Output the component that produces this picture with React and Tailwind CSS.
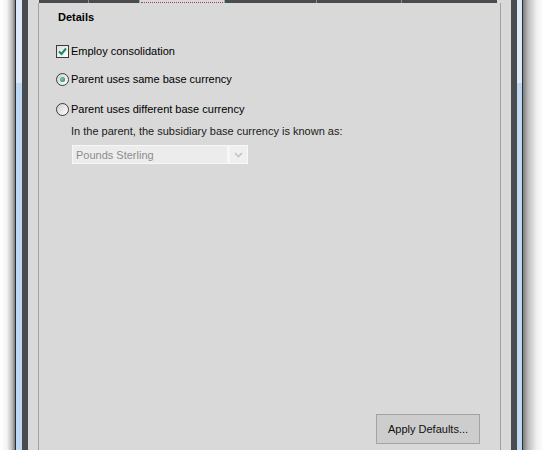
import React from 'react';

const font = { fontFamily: '"Liberation Sans", Arial, sans-serif' };

const Checkbox = ({ checked }) => (
  <span className="relative inline-block w-[13px] h-[13px] border border-[#3c3c3c] bg-[linear-gradient(135deg,#dcdcdc,#ffffff)] shrink-0">
    {checked && (
      <svg className="absolute left-[1px] top-[1px]" width="9" height="9" viewBox="0 0 9 9">
        <path d="M1 4.5 L3.5 7 L8 1.5" fill="none" stroke="#1b8a66" strokeWidth="2" />
      </svg>
    )}
  </span>
);

const Radio = ({ checked }) => (
  <span className="flex items-center justify-center w-[13px] h-[13px] rounded-full border border-[#3c3c3c] bg-[linear-gradient(135deg,#d0d0d0,#ffffff)] shrink-0">
    {checked && (
      <span className="w-[5px] h-[5px] rounded-full bg-[radial-gradient(circle_at_40%_40%,#7fd0b4,#137a58)]" />
    )}
  </span>
);

const TabStrip = () => (
  <div className="flex h-[3px]">
    <div className="w-[49px] bg-[#4a4b4f]" />
    <div className="w-px bg-[#8d8e92]" />
    <div className="w-[50px] bg-[#4a4b4f]" />
    {/* selected tab */}
    <div className="w-[86px] border-x border-[#6fbca6] bg-[#d9d9d9] flex flex-col">
      <div className="h-[2px]" />
      <div className="h-px mx-[1px] border-t border-dotted border-[#a0405a]" />
    </div>
    <div className="w-[91px] bg-[#4a4b4f]" />
    <div className="w-px bg-[#8d8e92]" />
    <div className="w-[84px] bg-[#4a4b4f]" />
    <div className="w-px bg-[#8d8e92]" />
    <div className="w-[95px] bg-[#4a4b4f]" />
    <div className="flex-1 bg-[#d9d9d9]" />
  </div>
);

export default function App() {
  return (
    <div className="w-[544px] h-[450px] overflow-hidden flex bg-[#d9d9d9] text-[11px] text-black" style={font}>
      {/* left frame */}
      <div className="w-[15px] bg-[linear-gradient(to_right,#ffffff_0%,#f4f4f4_45%,#bdbdbd_80%,#7c7c7c_100%)]" />
      <div className="w-px bg-[#2e2e30]" />
      <div className="w-[6px] flex flex-col">
        <div className="h-[83px] bg-[#dce9f8]" />
        <div className="flex-1 bg-[#bed7f3]" />
      </div>
      <div className="w-[6px] bg-[#4a4b4f]" />
      <div className="w-[10px] bg-[#d9d9d9]" />

      {/* tab pane */}
      <div className="w-[463px] flex flex-col">
        <div className="flex h-[3px]">
          <div className="w-px bg-[#d9d9d9]" />
          <div className="flex-1">
            <TabStrip />
          </div>
        </div>
        <div className="flex-1 border-x border-[#a0a0a0] bg-[#d9d9d9] flex flex-col">
          <div className="mt-[8px] ml-[19px] h-[13px] leading-[13px] font-bold">Details</div>

          <div className="mt-[21px] ml-[17px] h-[13px] flex items-center gap-[2px] leading-[13px]">
            <Checkbox checked />
            <span>Employ consolidation</span>
          </div>

          <div className="mt-[15px] ml-[17px] h-[13px] flex items-center gap-[2px] leading-[13px]">
            <Radio checked />
            <span>Parent uses same base currency</span>
          </div>

          <div className="mt-[17px] ml-[17px] h-[13px] flex items-center gap-[2px] leading-[13px]">
            <Radio />
            <span>Parent uses different base currency</span>
          </div>

          <div className="mt-[9px] ml-[32px] h-[13px] leading-[13px] text-[#1a1a1a]">
            In the parent, the subsidiary base currency is known as:
          </div>

          <div className="mt-[7px] ml-[33px] w-[176px] h-[19px] border border-[#f7f7f7] bg-[#f7f7f7] flex">
            <div className="w-[154px] bg-[#ececec] pl-[3px] pt-[1px] leading-[17px] text-[#8c8c8c]">Pounds Sterling</div>
            <div className="w-[3px]" />
            <div className="flex-1 bg-[#efefef] flex items-center justify-center">
              <svg width="9" height="6" viewBox="0 0 9 6">
                <path d="M1 1 L4.5 4.5 L8 1" fill="none" stroke="#c4c4c4" strokeWidth="1.6" />
              </svg>
            </div>
          </div>

          <div className="mt-[250px] flex justify-end pr-[20px]">
            <button className="w-[104px] h-[30px] border border-[#a3a3a3] bg-[#cdcdcd] text-[11px] text-[#111]">
              Apply Defaults...
            </button>
          </div>
        </div>
      </div>

      {/* right frame */}
      <div className="w-[10px] bg-[#d9d9d9]" />
      <div className="w-[6px] bg-[#4a4b4f]" />
      <div className="w-[5px] flex flex-col">
        <div className="h-[83px] bg-[#dce9f8]" />
        <div className="flex-1 bg-[#bed7f3]" />
      </div>
      <div className="w-px bg-[#2e2e30]" />
      <div className="flex-1 bg-[linear-gradient(to_right,#7c7c7c_0%,#bdbdbd_25%,#f0f0f0_65%,#ffffff_100%)]" />
    </div>
  );
}
